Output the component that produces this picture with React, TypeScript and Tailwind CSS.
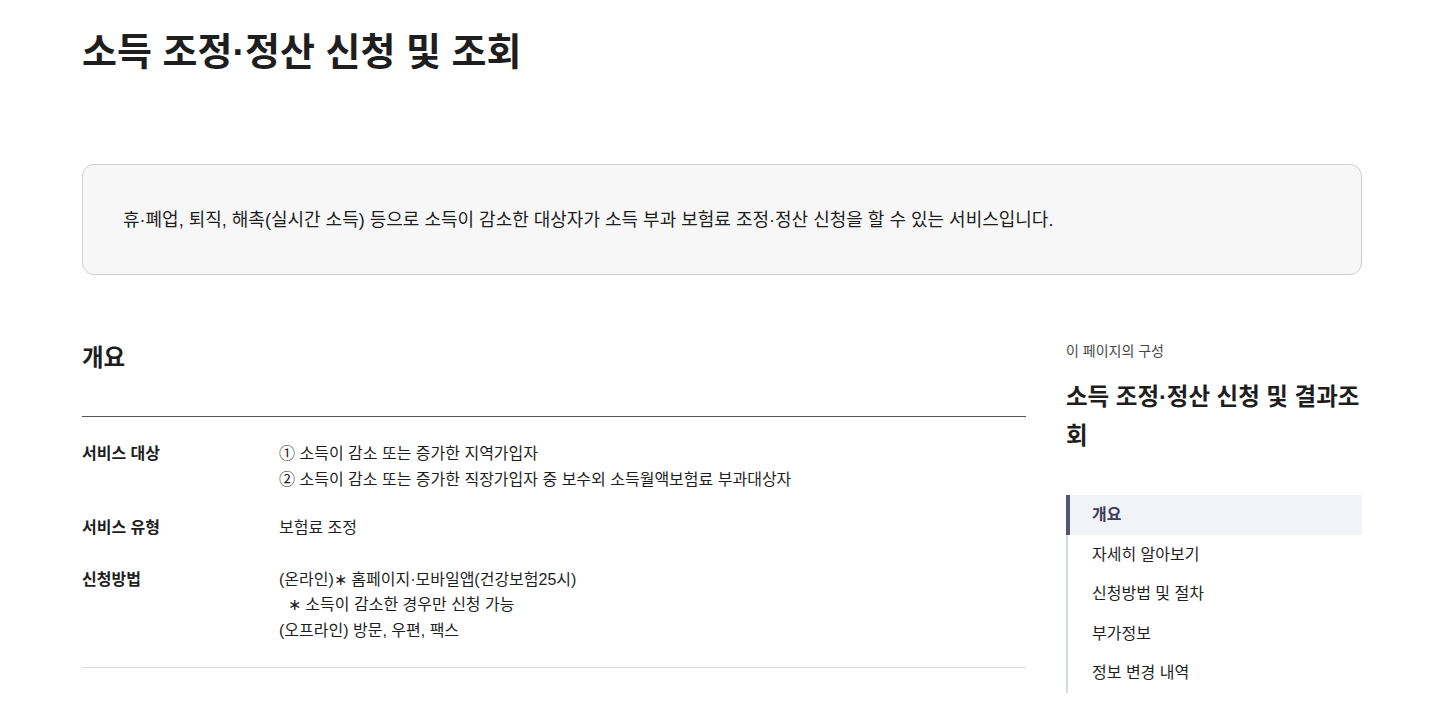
import React from 'react';

const font = { fontFamily: '"Liberation Sans", "Noto Sans CJK KR", sans-serif' };

const rows = [
  {
    label: '서비스 대상',
    lines: ['① 소득이 감소 또는 증가한 지역가입자', '② 소득이 감소 또는 증가한 직장가입자 중 보수외 소득월액보험료 부과대상자'],
    gap: '',
  },
  { label: '서비스 유형', lines: ['보험료 조정'], gap: 'mt-[23px]' },
  {
    label: '신청방법',
    lines: ['(온라인)∗ 홈페이지·모바일앱(건강보험25시)', '\u00a0\u00a0∗ 소득이 감소한 경우만 신청 가능', '(오프라인) 방문, 우편, 팩스'],
    gap: 'mt-[26px]',
  },
];

const toc = ['개요', '자세히 알아보기', '신청방법 및 절차', '부가정보', '정보 변경 내역'];

export default function App() {
  return (
    <div className="min-h-screen bg-white text-[#1e1e1e]" style={font}>
      <div className="w-[1280px] ml-[82px]">
        {/* Title */}
        <h1 className="pt-[24px] text-[38px] font-bold leading-[56px] text-[#1e1e1e]">
          소득 조정·정산 신청 및 조회
        </h1>

        {/* Summary box */}
        <div className="mt-[84px] h-[111px] rounded-xl border border-[#cfcfcf] bg-[#f7f7f7] px-10 flex items-center">
          <p className="text-[18px] leading-7 text-[#1e1e1e]">
            휴·폐업, 퇴직, 해촉(실시간 소득) 등으로 소득이 감소한 대상자가 소득 부과 보험료 조정·정산 신청을 할 수 있는 서비스입니다.
          </p>
        </div>

        <div className="mt-[64px] flex gap-10">
          {/* Main */}
          <div className="w-[944px]">
            <h2 className="pt-[3px] text-[23.5px] font-bold leading-8">개요</h2>
            <div className="mt-[42px] border-t border-[#555]" />
            <div className="pt-[24px] pb-[24px] border-b border-[#d9d9d9]">
              {rows.map((r) => (
                <div key={r.label} className={`flex ${r.gap}`}>
                  <div className="w-[197px] shrink-0 text-[16px] font-bold leading-[25.5px]">{r.label}</div>
                  <div className="text-[16px] leading-[25.5px] text-[#1e1e1e]">
                    {r.lines.map((l) => (
                      <div key={l}>{l}</div>
                    ))}
                  </div>
                </div>
              ))}
            </div>
          </div>

          {/* Sidebar */}
          <aside className="w-[296px]">
            <p className="mt-[2px] text-[14px] leading-5 text-[#464646]">이 페이지의 구성</p>
            <h3 className="mt-[17px] text-[23.5px] font-bold leading-[39px]">소득 조정·정산 신청 및 결과조회</h3>
            <ul className="mt-[39px] border-l-2 border-[#d3d9e3]">
              {toc.map((t, i) => (
                <li
                  key={t}
                  className={
                    i === 0
                      ? '-ml-[2px] h-10 flex items-center border-l-4 border-[#51547a] bg-[#f2f3f8] pl-[22px] text-[16px] font-bold text-[#3b3d58]'
                      : 'h-[39.5px] flex items-center pl-6 text-[16px] text-[#1e1e1e]'
                  }
                >
                  {t}
                </li>
              ))}
            </ul>
          </aside>
        </div>
      </div>
    </div>
  );
}
